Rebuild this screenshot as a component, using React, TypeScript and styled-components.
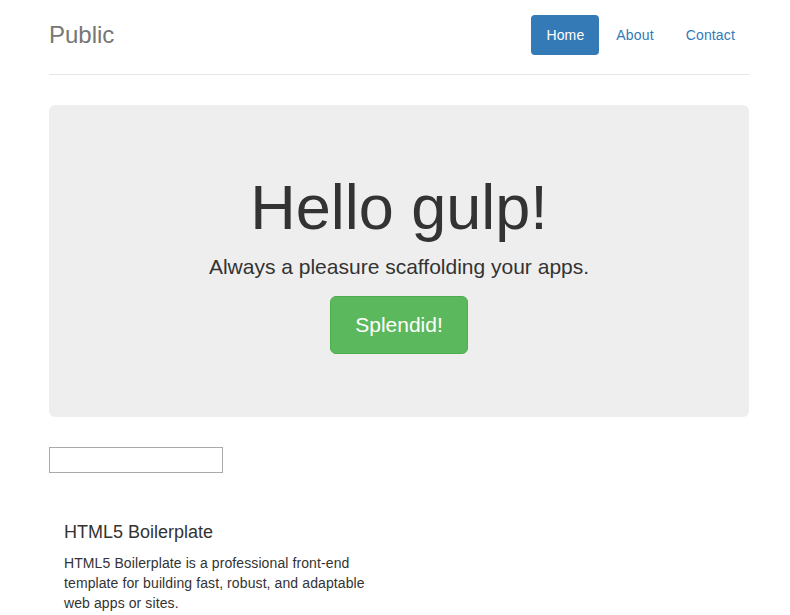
import React from "react";
import styled, { createGlobalStyle } from "styled-components";

const GlobalStyle = createGlobalStyle`
  html, body { margin: 0; padding: 0; background: #fff; }
  body {
    font-family: "Liberation Sans", Arial, Helvetica, sans-serif;
    font-size: 14px;
    line-height: 1.42857143;
    color: #333;
  }
  * { box-sizing: border-box; }
`;

const Page = styled.div`
  padding: 15px 0 0 49px;
`;

const Container = styled.div`
  width: 700px;
`;

const Header = styled.header`
  display: flex;
  justify-content: space-between;
  align-items: flex-start;
  padding-bottom: 19px;
  border-bottom: 1px solid #e5e5e5;
  margin-bottom: 30px;
`;

const Brand = styled.h3`
  margin: 0;
  font-size: 24px;
  font-weight: 500;
  line-height: 40px;
  color: #777;
`;

const Nav = styled.nav`
  display: flex;
  gap: 2px;
  margin-right: -1px;
`;

const Pill = styled.a<{ $active?: boolean }>`
  display: block;
  padding: 10px 15px;
  line-height: 20px;
  font-size: 14px;
  letter-spacing: 0.15px;
  border-radius: 4px;
  text-decoration: none;
  color: ${(p) => (p.$active ? "#fff" : "#337ab7")};
  background: ${(p) => (p.$active ? "#337ab7" : "transparent")};
`;

const Jumbotron = styled.section`
  background: #eee;
  border-radius: 6px;
  padding: 48px 60px;
  text-align: center;
  margin-bottom: 30px;
`;

const Title = styled.h1`
  margin: 20px 0 10px;
  font-size: 63px;
  font-weight: 500;
  line-height: 1.1;
  color: #333;
`;

const Lead = styled.p`
  margin: 0 0 14px;
  font-size: 21px;
  font-weight: 200;
  line-height: 30px;
`;

const BigButton = styled.a`
  display: inline-block;
  padding: 14px 24px;
  font-size: 21px;
  line-height: 28px;
  color: #fff;
  background: #5cb85c;
  border: 1px solid #4cae4c;
  border-radius: 6px;
  text-decoration: none;
  vertical-align: top;
`;

const ButtonRow = styled.p`
  margin: 0 0 15px;
  line-height: 0;
`;

const Field = styled.input`
  display: block;
  width: 174px;
  height: 26px;
  margin: 1px 0 0;
  border: 1px solid #a9a9a9;
  background: #fff;
  padding: 2px 4px;
  font: inherit;
`;

const Marketing = styled.div`
  margin: 40px 0 0;
  display: grid;
  grid-template-columns: 350px 350px;
`;

const Col = styled.div`
  padding: 0 15px;
`;

const FeatureTitle = styled.h4`
  margin: 10px 0;
  font-size: 18px;
  font-weight: 500;
  line-height: 1.1;
  color: #333;
`;

const FeatureText = styled.p`
  margin: 0 0 10px;
  font-size: 14px;
  line-height: 20px;
  letter-spacing: 0.1px;
  color: #333;
`;

export default function App() {
  return (
    <Page>
      <GlobalStyle />
      <Container>
        <Header>
          <Brand>Public</Brand>
          <Nav>
            <Pill href="#" $active>Home</Pill>
            <Pill href="#">About</Pill>
            <Pill href="#">Contact</Pill>
          </Nav>
        </Header>
        <Jumbotron>
          <Title>Hello gulp!</Title>
          <Lead>Always a pleasure scaffolding your apps.</Lead>
          <ButtonRow>
            <BigButton href="#">Splendid!</BigButton>
          </ButtonRow>
        </Jumbotron>
        <Field type="text" aria-label="field" />
        <Marketing>
          <Col>
            <FeatureTitle>HTML5 Boilerplate</FeatureTitle>
            <FeatureText>
              HTML5 Boilerplate is a professional front-end template for building fast, robust, and adaptable web apps or sites.
            </FeatureText>
          </Col>
        </Marketing>
      </Container>
    </Page>
  );
}
